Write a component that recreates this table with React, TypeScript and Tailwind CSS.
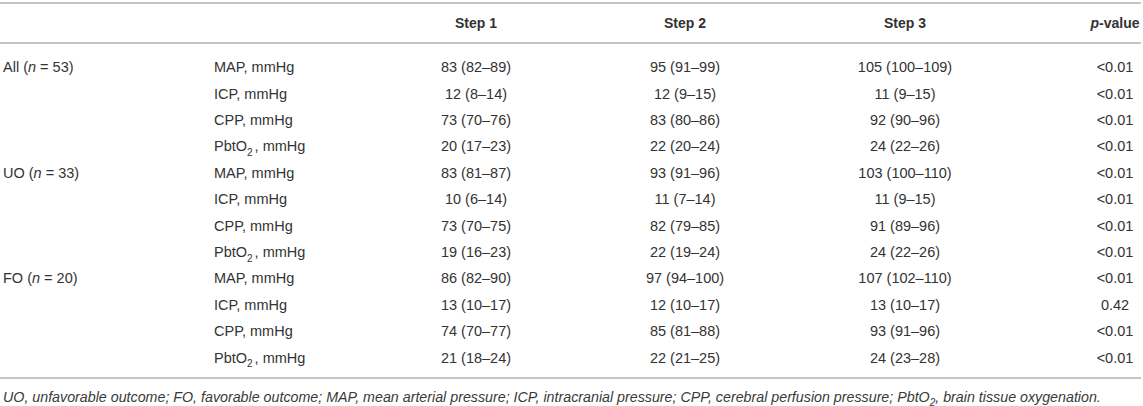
import type { ReactNode } from "react"

type Row = [string, string, string, string, string]

const groups: { label: string; n: number; rows: Row[] }[] = [
  {
    label: "All",
    n: 53,
    rows: [
      ["MAP", "83 (82–89)", "95 (91–99)", "105 (100–109)", "<0.01"],
      ["ICP", "12 (8–14)", "12 (9–15)", "11 (9–15)", "<0.01"],
      ["CPP", "73 (70–76)", "83 (80–86)", "92 (90–96)", "<0.01"],
      ["PbtO2", "20 (17–23)", "22 (20–24)", "24 (22–26)", "<0.01"],
    ],
  },
  {
    label: "UO",
    n: 33,
    rows: [
      ["MAP", "83 (81–87)", "93 (91–96)", "103 (100–110)", "<0.01"],
      ["ICP", "10 (6–14)", "11 (7–14)", "11 (9–15)", "<0.01"],
      ["CPP", "73 (70–75)", "82 (79–85)", "91 (89–96)", "<0.01"],
      ["PbtO2", "19 (16–23)", "22 (19–24)", "24 (22–26)", "<0.01"],
    ],
  },
  {
    label: "FO",
    n: 20,
    rows: [
      ["MAP", "86 (82–90)", "97 (94–100)", "107 (102–110)", "<0.01"],
      ["ICP", "13 (10–17)", "12 (10–17)", "13 (10–17)", "0.42"],
      ["CPP", "74 (70–77)", "85 (81–88)", "93 (91–96)", "<0.01"],
      ["PbtO2", "21 (18–24)", "22 (21–25)", "24 (23–28)", "<0.01"],
    ],
  },
]

const gridCols = "grid grid-cols-[211px_169px_192px_226px_214px_1fr] items-center"

function Rule() {
  return <div className="h-[2px] w-[1141px] bg-[#c4c4c4]" />
}

function Param({ name }: { name: string }): ReactNode {
  if (name === "PbtO2") {
    return (
      <>
        PbtO<sub className="pr-[2px] text-[10px] align-[-2px]">2</sub>, mmHg
      </>
    )
  }
  return <>{name}, mmHg</>
}

export default function App() {
  return (
    <div className="h-[406px] w-[1143px] bg-white font-['Liberation_Sans',Arial,sans-serif] text-[14.5px] text-[#333]">
      <div className="pt-[2px]">
        <Rule />
      </div>

      <div className={`${gridCols} h-[38px] text-[14px] font-bold`}>
        <div />
        <div />
        <div className="text-center">Step 1</div>
        <div className="text-center">Step 2</div>
        <div className="text-center">Step 3</div>
        <div className="pl-[75px] text-center">
          <i>p</i>-value
        </div>
      </div>
      <Rule />

      <div className="pt-[11px] pb-[5px]">
        {groups.map((group) =>
          group.rows.map((row, i) => (
            <div key={group.label + row[0]} className={`${gridCols} h-[26.4px]`}>
              <div className="pl-[3px]">
                {i === 0 ? (
                  <>
                    {group.label} (<i>n</i>&nbsp;=&nbsp;{group.n})
                  </>
                ) : null}
              </div>
              <div className="pl-[3px]">
                <Param name={row[0]} />
              </div>
              <div className="text-center">{row[1]}</div>
              <div className="text-center">{row[2]}</div>
              <div className="text-center">{row[3]}</div>
              <div className="pl-[75px] text-center">{row[4]}</div>
            </div>
          )),
        )}
      </div>
      <Rule />

      <p className="mt-[10px] pl-[3px] text-[14.25px] leading-[16px] italic text-[#3a3a3a]">
        UO, unfavorable outcome; FO, favorable outcome; MAP, mean arterial pressure; ICP, intracranial
        pressure; CPP, cerebral perfusion pressure; PbtO<sub className="text-[10px] align-[-2px]">2</sub>,
        brain tissue oxygenation.
      </p>
    </div>
  )
}
